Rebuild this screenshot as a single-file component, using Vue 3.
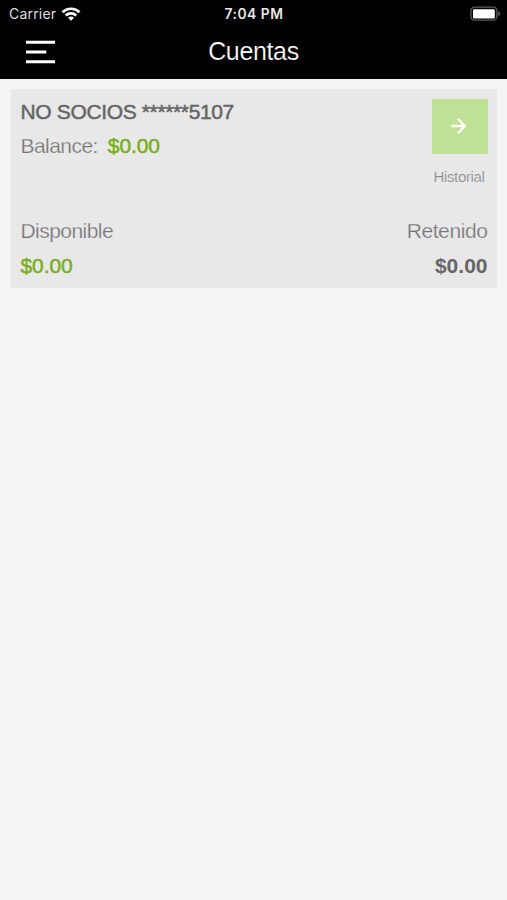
<script setup>
const account = {
  name: 'NO SOCIOS ******5107',
  balance: '$0.00',
  available: '$0.00',
  held: '$0.00',
}
</script>

<template>
  <div class="screen">
    <header class="top">
      <div class="status">
        <div class="carrier">
          <span>Carrier</span>
          <svg class="wifi" width="20" height="14" viewBox="0 0 20 14">
            <g fill="none" stroke="#fff" stroke-width="2.7">
              <path d="M1.5 5.2C6.2 .6 13.8 .6 18.5 5.2" />
              <path d="M4.7 8.5C7.7 5.7 12.3 5.7 15.3 8.5" />
            </g>
            <path d="M7 10.7C8.7 9.2 11.3 9.2 13 10.7L10 13.7Z" fill="#fff" />
          </svg>
        </div>
        <time class="clock">7:04 PM</time>
        <svg class="battery" width="32" height="16" viewBox="0 0 32 16">
          <rect x="1.9" y="1.2" width="26" height="13" rx="3.6" fill="none" stroke="#5d5d5d" stroke-width="1.3" />
          <rect x="4" y="3.2" width="21.8" height="9.4" rx="1.4" fill="#fff" />
          <path d="M29.3 5.2C31.8 6.2 31.8 9.2 29.3 10.2Z" fill="#5d5d5d" />
        </svg>
      </div>
      <div class="nav">
        <svg class="menu" width="30" height="24" viewBox="0 0 30 24">
          <path d="M0 2.2H29M0 12H20.3M0 21.8H29" stroke="#fff" stroke-width="3" />
        </svg>
        <h1>Cuentas</h1>
      </div>
    </header>
    <main>
      <section class="card">
        <div class="summary">
          <div class="info">
            <div class="name medium">{{ account.name }}</div>
            <div class="balance">
              <span class="light">Balance:</span>
              <span class="green medium">{{ account.balance }}</span>
            </div>
          </div>
          <div class="history">
            <button aria-label="Historial">
              <svg width="16" height="18" viewBox="0 0 16 18">
                <path d="M.3 9H14M6.8 1.8L14 9L6.8 16.2" fill="none" stroke="#fff" stroke-width="2.3" />
              </svg>
            </button>
            <span>Historial</span>
          </div>
        </div>
        <div class="amounts">
          <div>
            <div class="light">Disponible</div>
            <div class="green medium">{{ account.available }}</div>
          </div>
          <div class="right">
            <div class="light retained">Retenido</div>
            <div class="held">{{ account.held }}</div>
          </div>
        </div>
      </section>
    </main>
  </div>
</template>

<style>
body { margin: 0; background: #f4f4f4; }
</style>

<style scoped>
.screen {
  min-height: 900px;
  background: #f4f4f4;
  color: #666;
  font-family: "Liberation Sans", Arial, sans-serif;
  font-size: 21px;
  line-height: 35px;
  white-space: nowrap;
}
.top { height: 79px; background: #000; color: #fff; }
.status {
  display: grid;
  grid-template-columns: 1fr auto 1fr;
  align-items: center;
  height: 27px;
  padding: 0 6px 0 9px;
  font-family: Inter, sans-serif;
  font-size: 14px;
  line-height: 26px;
}
.carrier { display: flex; align-items: center; gap: 5px; color: #dedede; letter-spacing: .2px; }
.clock { margin-right: 2px; padding-top: 1px; font-weight: 600; font-size: 13.8px; letter-spacing: .5px; color: #e8e8e8; }
.battery { justify-self: end; }
.nav {
  display: grid;
  grid-template-columns: 1fr auto 1fr;
  align-items: center;
  height: 50px;
  padding: 0 26px;
}
h1 { margin: 0; font-size: 25px; font-weight: 400; line-height: 48px; padding-bottom: 2px; letter-spacing: -.35px; -webkit-text-stroke: .2px #000; }
main { padding: 9.5px 10px 0 10.5px; }
.card { height: 199px; box-sizing: border-box; padding: 6px 9.5px 0 10px; background: #e8e8e8; }
.summary { display: flex; justify-content: space-between; height: 118px; }
.info { margin-top: -1px; }
.name { letter-spacing: -.36px; }
.balance { display: flex; gap: 10px; margin-top: -.5px; }
.medium { -webkit-text-stroke: .5px currentColor; }
.green { color: #79ae20; letter-spacing: -.1px; }
.light { color: #757575; letter-spacing: -.55px; -webkit-text-stroke: .25px #e8e8e8; }
.retained { letter-spacing: -.4px; }
.history {
  display: flex;
  flex-direction: column;
  align-items: center;
  padding-top: 4px;
  color: #888;
  font-size: 15px;
  letter-spacing: -.35px;
  -webkit-text-stroke: .2px #e8e8e8;
}
.history span { margin-right: 1px; line-height: 46px; }
button {
  display: grid;
  place-items: center;
  width: 56px;
  height: 55px;
  padding: 0 2px 0 0;
  border: 0;
  background: #bfe196;
}
.amounts { display: flex; justify-content: space-between; }
.right { text-align: right; }
.held { font-weight: 700; }
</style>
